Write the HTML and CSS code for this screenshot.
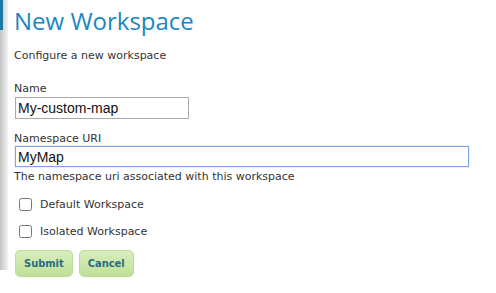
FILE: index.html
```html
<!DOCTYPE html>
<html lang="en">
<head>
    <meta charset="UTF-8">
    <title>New Workspace</title>
    <link rel="stylesheet" href="styles.css">
</head>
<body>
    <div class="frame">
        <!-- left edge: sidebar tab and shadow -->
        <div class="edge"><div class="edge-tab"></div></div>

        <div class="panel">
            <h1>New Workspace</h1>
            <p class="intro">Configure a new workspace</p>

            <form class="ws-form">
                <label for="name">Name</label>
                <input type="text" id="name" class="field short" value="My-custom-map">

                <label for="uri">Namespace URI</label>
                <input type="text" id="uri" class="field wide focus" value="MyMap" spellcheck="true" autofocus>
                <p class="hint">The namespace uri associated with this workspace</p>

                <div class="check-row">
                    <input type="checkbox" id="default_ws">
                    <label for="default_ws">Default Workspace</label>
                </div>
                <div class="check-row">
                    <input type="checkbox" id="isolated_ws">
                    <label for="isolated_ws">Isolated Workspace</label>
                </div>

                <div class="button-container">
                    <button type="button">Submit</button>
                    <button type="button">Cancel</button>
                </div>
            </form>
        </div>
    </div>
</body>
</html>
```

FILE: styles.css
```css
/* Basic page styling */
body {
    margin: 0;
    background-color: #fff;
    font-family: "DejaVu Sans", Verdana, sans-serif;
    color: #333;
}

.frame {
    display: flex;
    height: 293px;
}

/* Left edge with shadow */
.edge {
    width: 8px;
    height: 270px;
    background: linear-gradient(to right, #c4c4c4, #f2f2f2);
    position: relative;
}

.edge-tab {
    position: absolute;
    left: 0;
    top: 0;
    width: 3px;
    height: 30px;
    background-color: #1d7aa0;
}

.panel {
    flex: 1;
    background-color: #fff;
    border-top-left-radius: 6px;
    padding: 0 0 0 6px;
}

/* Title */
h1 {
    margin: 4px 0 0 0;
    font-family: "Open Sans", sans-serif;
    font-weight: normal;
    font-size: 24px;
    line-height: 34px;
    color: #1a86c4;
}

.intro {
    margin: 11px 0 0 0;
    font-size: 11px;
    line-height: 14px;
}

.ws-form {
    margin-top: 19px;
}

label {
    display: block;
    font-size: 11px;
    line-height: 14px;
}

.field {
    display: block;
    box-sizing: border-box;
    height: 22px;
    margin: 1px 0 13px 1px;
    padding: 0 2px;
    border: 1px solid #a9a9a9;
    font-family: "Liberation Sans", Arial, sans-serif;
    font-size: 14px;
    color: #111;
    outline: none;
}

.short {
    width: 174px;
}

.wide {
    width: 454px;
    height: 21px;
    margin-top: 0;
    margin-bottom: 3px;
}

.focus {
    border-color: #7fa4e4;
    box-shadow: 0 0 1px #7fa4e4;
}

.hint {
    margin: 0 0 7px 0;
    font-size: 11px;
    line-height: 14px;
}

/* Checkbox rows */
.check-row {
    display: flex;
    align-items: center;
    height: 27px;
}

.check-row input {
    width: 13px;
    height: 13px;
    margin: 0 8px 0 5px;
}

.check-row label {
    color: #333;
}

/* Buttons */
.button-container {
    display: flex;
    gap: 6px;
    margin-top: 5px;
    margin-left: 1px;
}

button {
    height: 27px;
    padding: 0 8px;
    border: 1px solid #bcdc98;
    border-radius: 5px;
    background: linear-gradient(#d8edbd, #bfe097);
    color: #2a6b84;
    font-family: "DejaVu Sans Condensed", "DejaVu Sans", sans-serif;
    font-size: 11px;
    font-weight: bold;
    cursor: pointer;
}
```
